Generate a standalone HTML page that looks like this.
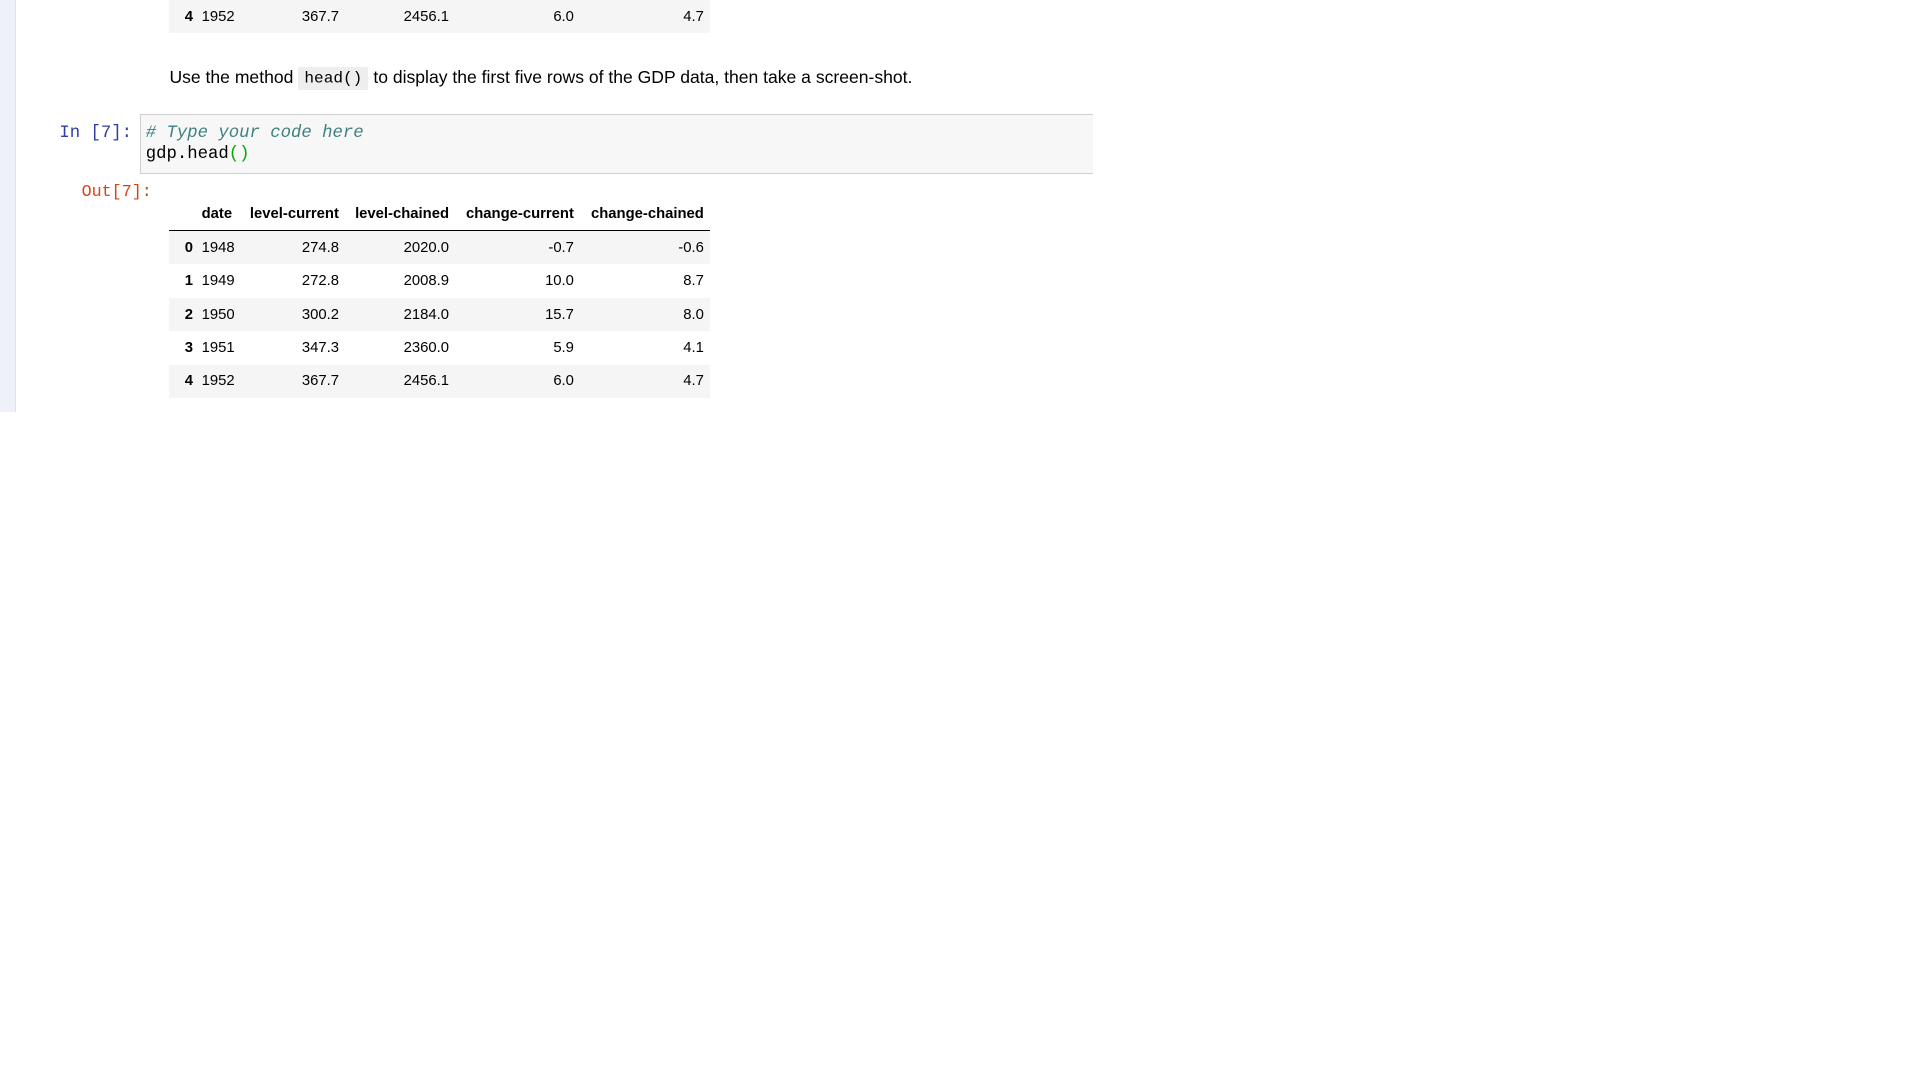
<!DOCTYPE html>
<html><head><meta charset="utf-8"><style>
html,body{margin:0;padding:0;background:#fff;}
#w{zoom:1.237;position:relative;width:1552px;height:873px;font-family:"Liberation Sans",Arial,sans-serif;color:#000;}
.bar{position:absolute;left:0;top:0;width:12px;height:333px;background:#eef2f8;border-right:1px solid #dde3ee;}
table{position:absolute;left:137px;border-collapse:collapse;font-size:12px;width:437px;table-layout:fixed;}
td,th{padding:0 5px 0 0;height:27px;text-align:right;white-space:nowrap;overflow:visible;}
th{font-weight:bold;}
tr.s td,tr.s th{background:#f5f5f5;}
thead th{height:26px;border-bottom:1px solid #000;}
.mono{font-family:"Liberation Mono",monospace;}
td.l{text-align:left;padding-left:2px;}
</style></head><body><div id="w">
<div class="bar"></div>
<table style="top:0"><colgroup><col style="width:24px"><col style="width:37px"><col style="width:81px"><col style="width:89px"><col style="width:101px"><col style="width:105px"></colgroup><tr class="s"><th>4</th><td class="l">1952</td><td>367.7</td><td>2456.1</td><td>6.0</td><td>4.7</td></tr></table>
<div style="position:absolute;left:137px;top:54px;font-size:14.2px;">Use the method <span class="mono" style="background:#eee;padding:2px 5px;font-size:13px;">head()</span> to display the first five rows of the GDP data, then take a screen-shot.</div>
<div class="mono" style="position:absolute;left:48px;top:100px;font-size:14px;color:#303f9f;">In [7]:</div>
<div class="mono" style="position:absolute;left:113px;top:92px;width:771px;height:49px;background:#f7f7f7;border:1px solid #cfcfcf;border-right:none;font-size:14px;line-height:17px;padding:7px 0 0 4px;box-sizing:border-box;">
<div style="color:#408080;font-style:italic;"># Type your code here</div>
<div>gdp.head<span style="color:#0a0">()</span></div></div>
<div class="mono" style="position:absolute;left:66px;top:148px;font-size:13.5px;color:#d84315;">Out[7]:</div>
<table style="top:160px"><colgroup><col style="width:24px"><col style="width:37px"><col style="width:81px"><col style="width:89px"><col style="width:101px"><col style="width:105px"></colgroup>
<thead><tr><th></th><th style="text-align:left;padding-left:2px">date</th><th>level-current</th><th>level-chained</th><th>change-current</th><th>change-chained</th></tr></thead>
<tbody>
<tr class="s"><th>0</th><td class="l">1948</td><td>274.8</td><td>2020.0</td><td>-0.7</td><td>-0.6</td></tr>
<tr><th>1</th><td class="l">1949</td><td>272.8</td><td>2008.9</td><td>10.0</td><td>8.7</td></tr>
<tr class="s"><th>2</th><td class="l">1950</td><td>300.2</td><td>2184.0</td><td>15.7</td><td>8.0</td></tr>
<tr><th>3</th><td class="l">1951</td><td>347.3</td><td>2360.0</td><td>5.9</td><td>4.1</td></tr>
<tr class="s"><th>4</th><td class="l">1952</td><td>367.7</td><td>2456.1</td><td>6.0</td><td>4.7</td></tr>
</tbody></table>
</div></body></html>
